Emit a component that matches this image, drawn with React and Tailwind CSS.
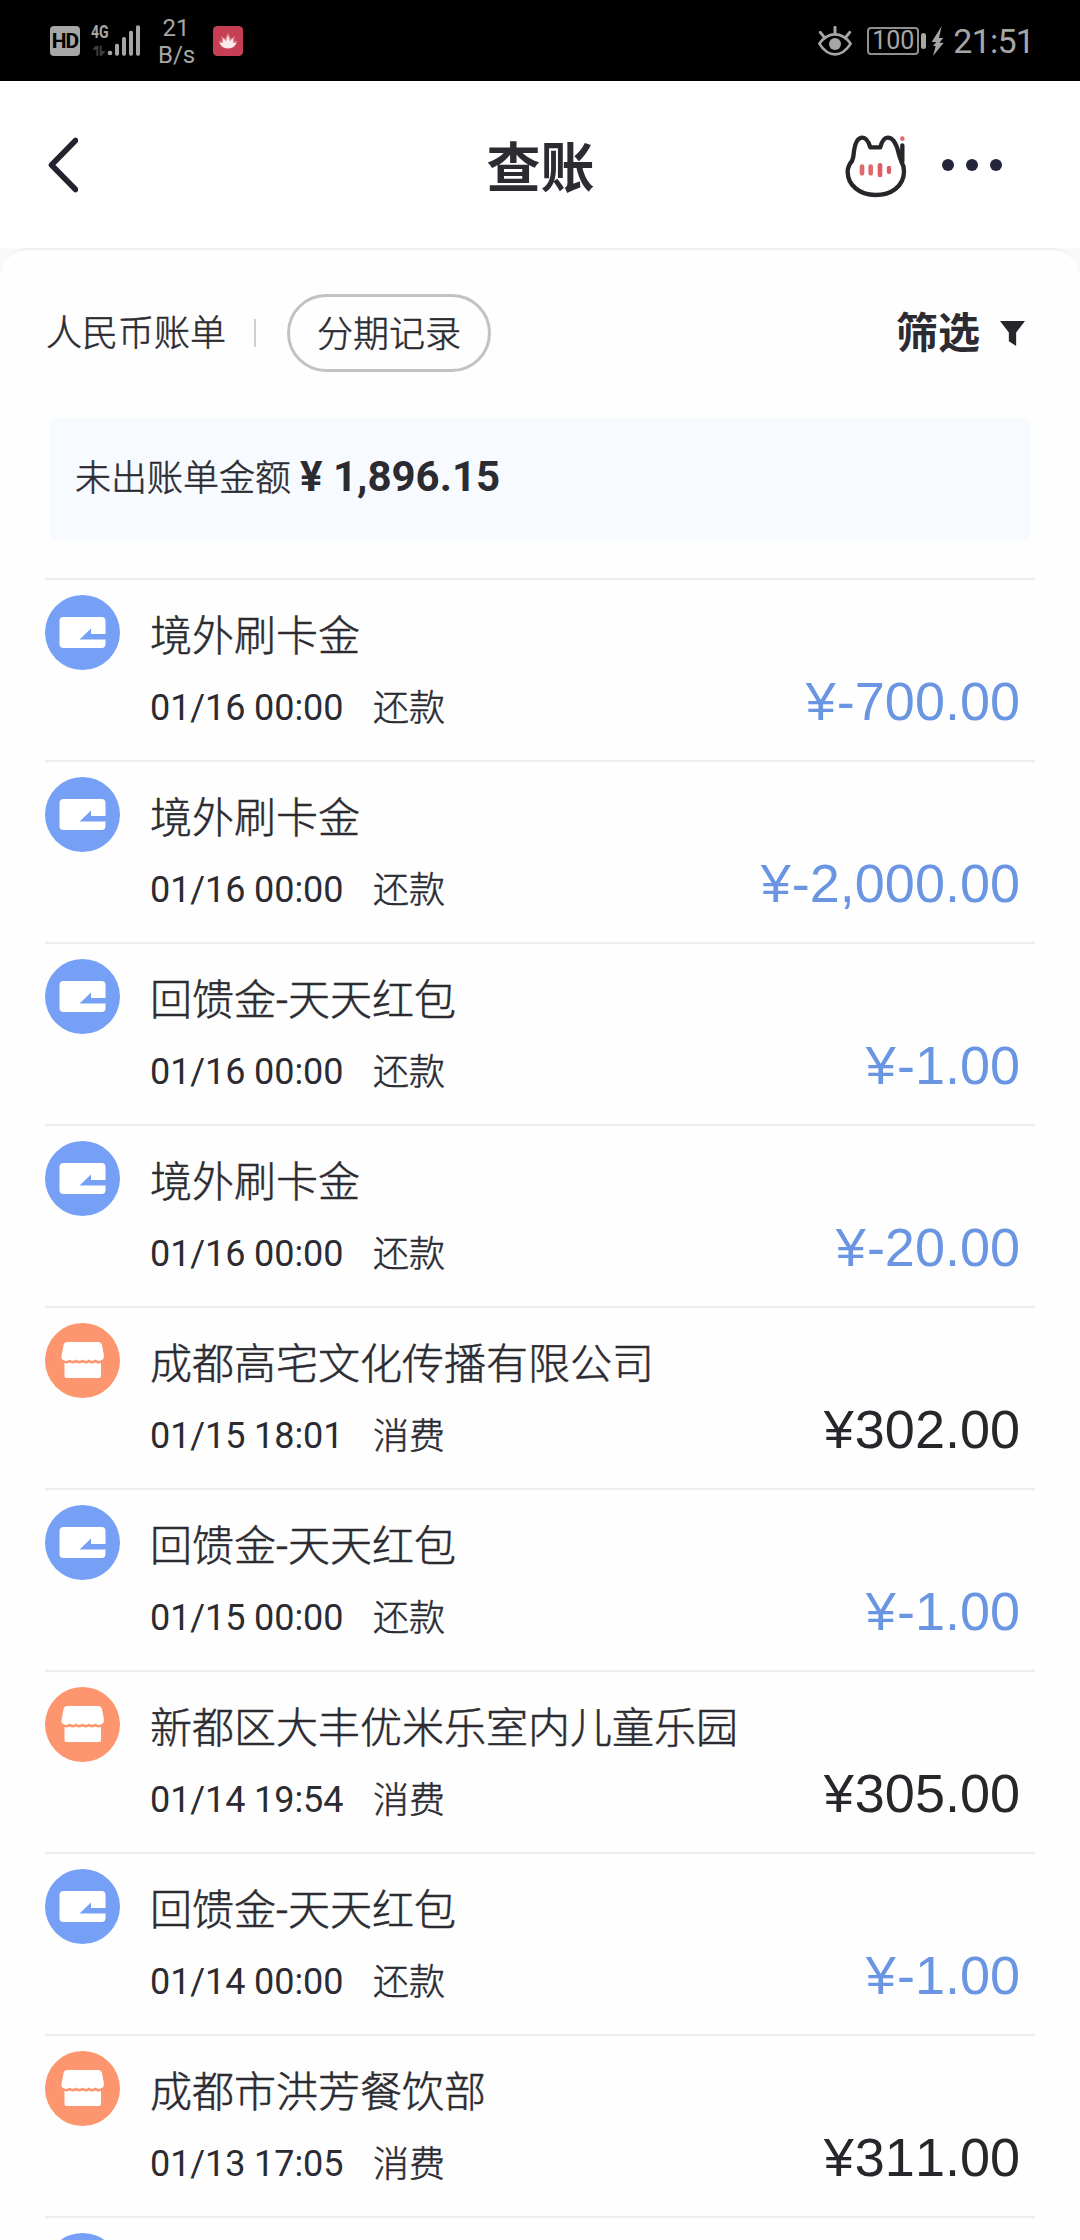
import React from "react";

const bills = [
  { id: 1, type: "repay", title: "境外刷卡金", time: "01/16 00:00", amount: "-700.00" },
  { id: 2, type: "repay", title: "境外刷卡金", time: "01/16 00:00", amount: "-2,000.00" },
  { id: 3, type: "repay", title: "回馈金-天天红包", time: "01/16 00:00", amount: "-1.00" },
  { id: 4, type: "repay", title: "境外刷卡金", time: "01/16 00:00", amount: "-20.00" },
  { id: 5, type: "spend", title: "成都高宅文化传播有限公司", time: "01/15 18:01", amount: "302.00" },
  { id: 6, type: "repay", title: "回馈金-天天红包", time: "01/15 00:00", amount: "-1.00" },
  { id: 7, type: "spend", title: "新都区大丰优米乐室内儿童乐园", time: "01/14 19:54", amount: "305.00" },
  { id: 8, type: "repay", title: "回馈金-天天红包", time: "01/14 00:00", amount: "-1.00" },
  { id: 9, type: "spend", title: "成都市洪芳餐饮部", time: "01/13 17:05", amount: "311.00" },
];

const SignalIcon = () => (
  <div className="ml-[11px] relative w-[50px] h-8 shrink-0">
    <svg className="w-[50px] h-8" viewBox="0 0 150 96">
      <g fill="#3d3d3d">
        <path d="M14 62 L22 62 L22 92 L16 92 L16 74 L4 74 Z" />
        <path d="M26 62 L32 62 L32 78 L44 78 L32 92 L26 92 Z" />
      </g>
      <g fill="#a6a6a6">
        <circle cx="57" cy="84" r="7" />
        <rect x="72" y="56" width="12" height="36" rx="5" />
        <rect x="93" y="36" width="12" height="56" rx="5" />
        <rect x="114" y="17" width="12" height="75" rx="5" />
        <rect x="135" y="1" width="12" height="91" rx="5" />
      </g>
    </svg>
    <span className="absolute left-0 -top-[5px] text-[19px] leading-6 font-bold origin-left scale-x-[0.74]">4G</span>
  </div>
);

const LotusIcon = () => (
  <svg className="ml-[19px] w-[30px] h-[30px] shrink-0" viewBox="0 0 90 90">
    <rect width="90" height="90" rx="13" fill="#c63f54" />
    <path d="M45 20 L54 38 L66 30 L63 46 L73 44 Q68 68 45 68 Q22 68 17 44 L27 46 L24 30 L36 38 Z" fill="#dd7f8a" />
    <path d="M45 28 L51 46 L60 36 L60 50 L70 50 Q64 67 45 67 Q26 67 20 50 L30 50 L30 36 L39 46 Z" fill="#fbeaea" />
  </svg>
);

const EyeIcon = () => (
  <svg className="w-[34px] h-[30px] shrink-0" viewBox="0 0 102 90" fill="none" stroke="#a6a6a6">
    <path d="M4 53 Q24 25 51 25 Q78 25 98 53 Q78 85 51 85 Q24 85 4 53 Z" strokeWidth="8" />
    <circle cx="51" cy="54" r="18" fill="#a6a6a6" stroke="none" />
    <path d="M51 4 V22 M7 19 L19 34 M95 19 L83 34" strokeWidth="9" strokeLinecap="round" />
  </svg>
);

const StatusBar = () => (
  <div className="h-[81px] bg-black flex items-center pl-[50px] pr-[46px] text-[#a6a6a6]">
    <div className="w-[30px] h-[30px] rounded bg-[#a6a6a6] text-black text-[21px] font-bold leading-[31px] tracking-[-1px] flex justify-center shrink-0">
      HD
    </div>
    <SignalIcon />
    <div className="ml-[17px] w-9 text-center text-[24px] leading-[27px] mt-0.5">
      <p>21</p>
      <p>B/s</p>
    </div>
    <LotusIcon />

    <div className="ml-auto flex items-center">
      <EyeIcon />
      <div className="ml-[15px] w-[52px] h-7 rounded border-2 border-[#8f8f8f] text-[25px] leading-6 text-center">
        100
      </div>
      <div className="ml-[2px] w-[5px] h-4 rounded-sm bg-[#a6a6a6]" />
      <svg className="ml-[5px] w-[13px] h-[30px]" viewBox="0 0 39 90" fill="#a6a6a6">
        <path d="M32 0 L2 48 L16 48 L6 60 L14 60 L6 90 L38 50 L25 50 L37 36 L24 36 Z" />
      </svg>
      <span className="ml-[9px] mt-px text-[34px] leading-[40px] tracking-[-0.8px]">21:51</span>
    </div>
  </div>
);

const CatIcon = () => (
  <svg className="w-16 h-16 mt-0.5 shrink-0" viewBox="0 0 192 192" fill="none" strokeLinecap="round" strokeLinejoin="round">
    <path
      d="M175 34 V82 M172 82 Q180 96 180 112 C180 158 140 183 94 183 C46 183 11 152 11 114 Q11 96 24 81 Q28 72 29 60 C32 30 40 11 55 11 C68 11 74 24 79 40 H109 C113 24 118 11 131 11 C148 11 159 36 164 58 Q167 70 172 82"
      stroke="#26262b"
      strokeWidth="13"
    />
    <circle cx="175" cy="14" r="7" fill="#dc6b6f" />
    <path d="M54 98 V118 M80 98 V118" stroke="#dc6b6f" strokeWidth="14" />
    <path d="M108 94 V123" stroke="#de5c64" strokeWidth="14" />
    <path d="M135 102 V114" stroke="#de5c64" strokeWidth="13" />
  </svg>
);

const Header = () => (
  <div className="h-[167px] bg-white grid grid-cols-3 items-center pl-12 pr-[78px]">
    <svg className="w-[30px] h-[56px]" viewBox="0 0 30 56" fill="none" stroke="#232330" strokeWidth="5.6" strokeLinecap="round" strokeLinejoin="round">
      <path d="M27.5 3.5 L3.5 28 L27.5 52.5" />
    </svg>
    <h1 className="text-center text-[54px] leading-[60px] font-bold pl-[31px] pt-[10px]">查账</h1>
    <div className="flex items-center justify-end gap-[34px]">
      <CatIcon />
      <div className="flex gap-3">
        <span className="w-3 h-3 rounded-full bg-[#24243a]" />
        <span className="w-3 h-3 rounded-full bg-[#24243a]" />
        <span className="w-3 h-3 rounded-full bg-[#24243a]" />
      </div>
    </div>
  </div>
);

const RepayIcon = () => (
  <svg className="w-[75px] h-[75px] shrink-0" viewBox="0 0 75 75">
    <circle cx="37.5" cy="37.5" r="37.5" fill="#76a0f6" />
    <rect x="14.5" y="22" width="46" height="31" rx="4" fill="#fff" />
    <path d="M34.5 44.5 L46 33.5 V39 H62 V44.5 Z" fill="#76a0f6" />
  </svg>
);

const ShopIcon = () => (
  <svg className="w-[75px] h-[75px] shrink-0" viewBox="0 0 75 75">
    <circle cx="37.5" cy="37.5" r="37.5" fill="#fd956e" />
    <path
      d="M22 19 H53 Q56 19 57 22 L59 33 Q59 36 56.5 37 Q53.5 39 50.5 36.5 Q47 39 44 36.5 Q41 39 37.5 36.5 Q34 39 31 36.5 Q28 39 24.5 36.5 Q21.5 39 18.5 37 Q16 36 16.5 33 L18.5 22 Q19.5 19 22 19 Z"
      fill="#fff"
    />
    <path
      d="M19.5 40 Q22 41 24.5 39.5 Q28 41.5 31 39.5 Q34 41.5 37.5 39.5 Q41 41.5 44 39.5 Q47 41.5 50.5 39.5 Q53 41 56 40 V53 Q56 55 54 55 H21.5 Q19.5 55 19.5 53 Z"
      fill="#fff"
    />
  </svg>
);

const BillRow = ({ bill }) => {
  const isRepay = bill.type === "repay";

  return (
    <div className="h-[182px] border-t-2 border-[#ededef] flex pt-[15px] pr-[15px]">
      {isRepay ? <RepayIcon /> : <ShopIcon />}
      <div className="ml-[30px] flex-1 min-w-0">
        <h3 className="text-[42px] leading-[58px] mt-[13px] -mb-0.5 font-light [-webkit-text-stroke:0.5px] whitespace-nowrap">
          {bill.title}
        </h3>
        <div className="flex justify-between items-baseline">
          <p className="text-[36px] leading-[88px] flex">
            <span className="w-[223px] tracking-[-0.1px]">{bill.time}</span>
            <span className="mt-px font-light [-webkit-text-stroke:0.5px]">{isRepay ? "还款" : "消费"}</span>
          </p>
          <span
            className={`font-['Liberation_Sans'] text-[54px] leading-[60px] [font-kerning:none] ${
              isRepay ? "text-[#6a95e2]" : "text-[#26262b]"
            }`}
          >
            <span className="mr-px">¥</span>
            {bill.amount}
          </span>
        </div>
      </div>
    </div>
  );
};

const App = () => {
  return (
    <div className="w-[1080px] h-[2240px] overflow-hidden bg-[#f9f9fa] text-[#2b2b31] font-[Roboto,'Noto_Sans_CJK_SC',sans-serif]">
      <StatusBar />
      <Header />

      <div className="h-[1992px] overflow-hidden rounded-t-[28px] bg-[#fefefe] border-t-2 border-[#efeff0] px-[45px]">
        {/* Tabs and filter */}
        <div className="flex items-center mt-11 h-[78px] text-[36px]">
          <span className="ml-px pt-0.5 font-light [-webkit-text-stroke:0.5px]">人民币账单</span>
          <span className="ml-[28px] w-0.5 h-7 bg-[#cfcfcf]" />
          <button
            type="button"
            className="ml-[31px] w-[204px] h-[78px] rounded-full border-3 border-[#c2c2c2] leading-[76px] font-light [-webkit-text-stroke:0.5px]"
          >
            分期记录
          </button>
          <button type="button" className="ml-auto flex items-center text-[42px] font-bold">
            筛选
            <svg className="ml-5 mr-[10px] w-[25px] h-[25px]" viewBox="0 0 24 24" fill="#26262b">
              <path d="M0 0 H24 L15.5 11 V24 L8.5 19.5 V11 Z" />
            </svg>
          </button>
        </div>

        {/* Unbilled amount */}
        <div className="mt-[46px] ml-1 mr-[4px] h-[122px] rounded-md bg-[#f7faff] pl-[26px] flex items-baseline text-[36px] leading-[118px]">
          <span className="font-light [-webkit-text-stroke:0.5px]">未出账单金额</span>
          <span className="ml-[9px] font-bold text-[42px]">¥ 1,896.15</span>
        </div>

        <div className="mt-[38px]">
          {bills.map((bill) => (
            <BillRow key={bill.id} bill={bill} />
          ))}
          <div className="h-[182px] border-t-2 border-[#ededef] pt-[15px]">
            <RepayIcon />
          </div>
        </div>
      </div>
    </div>
  );
};

export default App;
